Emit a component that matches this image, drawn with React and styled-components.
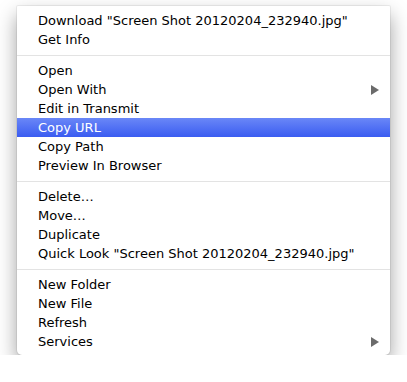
import React from 'react';
import styled, { createGlobalStyle } from 'styled-components';

const GlobalStyle = createGlobalStyle`
  html, body {
    margin: 0;
    padding: 0;
    background: #ffffff;
  }
  body {
    font-family: "DejaVu Sans", "Liberation Sans", sans-serif;
  }
`;

const Page = styled.div`
  padding: 6px 0 0 17px;
`;

const Menu = styled.ul`
  list-style: none;
  margin: 0;
  padding: 5px 0 4px;
  width: 373px;
  background: #ffffff;
  border-radius: 1px 1px 5px 5px;
  box-shadow: 0 0 0 1px rgba(0, 0, 0, 0.06), 0 9px 20px rgba(0, 0, 0, 0.38);
`;

const Item = styled.li`
  display: flex;
  align-items: center;
  justify-content: space-between;
  height: 19px;
  padding: 0 11px 0 21px;
  font-size: 13px;
  color: ${props => (props.active ? '#ffffff' : '#000000')};
  background: ${props =>
    props.active ? 'linear-gradient(#6a87f7, #3a5cf1)' : 'transparent'};
  white-space: nowrap;
`;

const Separator = styled.li`
  height: 12px;
  display: flex;
  align-items: center;

  &::before {
    content: '';
    flex: 1;
    height: 1px;
    background: #e3e3e3;
  }
`;

const Arrow = () => (
  <svg width="8" height="10" viewBox="0 0 8 10">
    <polygon points="0,0 8,5 0,10" fill="#6b6b6b" />
  </svg>
);

const groups = [
  [{ label: 'Download "Screen Shot 20120204_232940.jpg"' }, { label: 'Get Info' }],
  [
    { label: 'Open' },
    { label: 'Open With', sub: true },
    { label: 'Edit in Transmit' },
    { label: 'Copy URL', active: true },
    { label: 'Copy Path' },
    { label: 'Preview In Browser' },
  ],
  [
    { label: 'Delete…' },
    { label: 'Move…' },
    { label: 'Duplicate' },
    { label: 'Quick Look "Screen Shot 20120204_232940.jpg"' },
  ],
  [
    { label: 'New Folder' },
    { label: 'New File' },
    { label: 'Refresh' },
    { label: 'Services', sub: true },
  ],
];

export default function App() {
  return (
    <>
      <GlobalStyle />
      <Page>
        <Menu>
          {groups.map((group, gi) => (
            <React.Fragment key={gi}>
              {gi > 0 && <Separator />}
              {group.map(item => (
                <Item key={item.label} active={item.active}>
                  <span>{item.label}</span>
                  {item.sub && <Arrow />}
                </Item>
              ))}
            </React.Fragment>
          ))}
        </Menu>
      </Page>
    </>
  );
}
